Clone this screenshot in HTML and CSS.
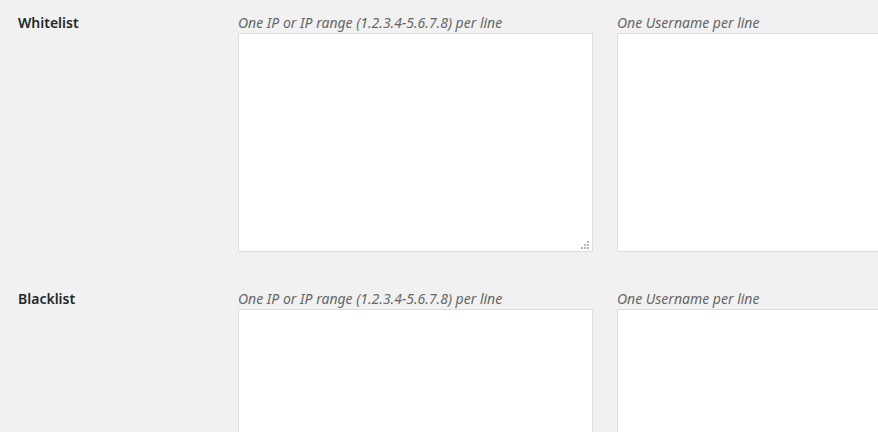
FILE: index.html
```html
<!DOCTYPE html>
<html lang="en">
<head>
    <meta charset="UTF-8">
    <title>Limit Login Attempts</title>
    <link rel="stylesheet" href="styles.css">
</head>
<body>
    <div class="wrap">
        <div class="row">
            <div class="label">Whitelist</div>
            <div class="fields">
                <div class="field">
                    <p class="hint">One IP or IP range (1.2.3.4-5.6.7.8) per line</p>
                    <div class="box">
                        <textarea name="ip_whitelist"></textarea>
                        <svg class="grip" width="9" height="9" viewBox="0 0 9 9"><rect x="7" y="1" width="2" height="2"/><rect x="4" y="4" width="2" height="2"/><rect x="7" y="4" width="2" height="2"/><rect x="1" y="7" width="2" height="2"/><rect x="4" y="7" width="2" height="2"/><rect x="7" y="7" width="2" height="2"/></svg>
                    </div>
                </div>
                <div class="field">
                    <p class="hint">One Username per line</p>
                    <div class="box">
                        <textarea name="user_whitelist"></textarea>
                    </div>
                </div>
            </div>
        </div>

        <div class="row">
            <div class="label">Blacklist</div>
            <div class="fields">
                <div class="field">
                    <p class="hint">One IP or IP range (1.2.3.4-5.6.7.8) per line</p>
                    <div class="box">
                        <textarea name="ip_blacklist"></textarea>
                    </div>
                </div>
                <div class="field">
                    <p class="hint">One Username per line</p>
                    <div class="box">
                        <textarea name="user_blacklist"></textarea>
                    </div>
                </div>
            </div>
        </div>
    </div>
</body>
</html>
```

FILE: styles.css
```css
html, body{
    margin: 0;
    overflow: hidden;
    background: #f1f1f1;
}
body{
    font-family: "Noto Sans", "Open Sans", sans-serif;
    font-size: 14px;
    color: #23282d;
}
.wrap{
    padding-left: 18px;
}
.row{
    display: flex;
    padding: 12px 0 24px;
}
.label{
    width: 220px;
    flex-shrink: 0;
    font-weight: 600;
    line-height: 21px;
}
.fields{
    display: flex;
    gap: 24px;
}
.hint{
    margin: 0;
    line-height: 21px;
    font-style: italic;
    color: #666;
}
/* textarea + grip */
.box{
    position: relative;
    width: 355px;
    height: 219px;
}
.box textarea{
    display: block;
    box-sizing: border-box;
    width: 100%;
    height: 100%;
    margin: 0;
    border: 1px solid #ddd;
    background: #fff;
    resize: none;
    outline: none;
}
.grip{
    position: absolute;
    right: 4px;
    bottom: 3px;
    fill: #b4b4b4;
}
```
